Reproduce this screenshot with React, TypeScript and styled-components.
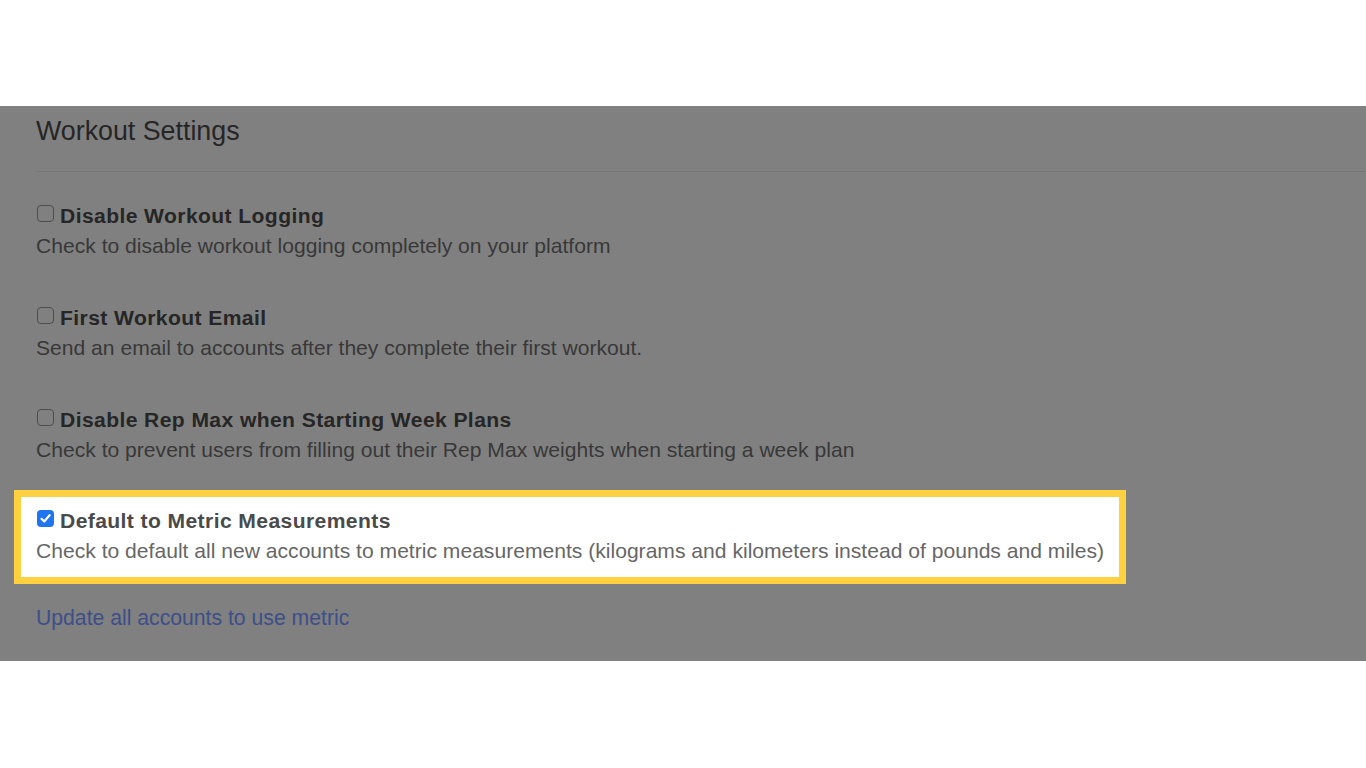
import React from "react";
import styled, { createGlobalStyle } from "styled-components";

const GlobalStyle = createGlobalStyle`
	html, body {
		margin: 0;
		padding: 0;
		background-color: #ffffff;
		font-family: "Liberation Sans", Arial, sans-serif;
	}
`;

const StyledPage = styled.div`
	width: 1366px;
	height: 768px;
	padding-top: 106px;
	box-sizing: border-box;
	overflow: hidden;
`;

const StyledPanel = styled.section`
	background-color: #808080;
	height: 555px;
	box-sizing: border-box;
	padding: 10px 0 0 36px;
	display: flex;
	flex-direction: column;
	align-items: flex-start;
`;

const StyledHeading = styled.h2`
	margin: 0;
	font-size: 26.8px;
	line-height: 30px;
	font-weight: normal;
	color: #262626;
`;

const StyledDivider = styled.hr`
	align-self: stretch;
	border: none;
	height: 1px;
	margin: 25px 0 29px;
	background-color: #777777;
`;

const StyledSetting = styled.div<{ $highlighted?: boolean }>`
	display: flex;
	flex-direction: column;
	font-size: 21.1px;
	line-height: 30px;
	margin-bottom: 42px;

	${({ $highlighted }) =>
		$highlighted &&
		`
		background-color: #ffffff;
		border: 7px solid #ffd140;
		margin: -17px 0 19px -22px;
		padding: 9px 15px 11px;
	`}
`;

const StyledTitleRow = styled.label<{ $highlighted?: boolean }>`
	display: flex;
	align-items: center;
	gap: 6px;
	font-weight: bold;
	letter-spacing: 0.4px;
	color: ${({ $highlighted }) => ($highlighted ? "#4a4a4a" : "#262626")};
`;

const StyledBox = styled.span<{ $checked?: boolean }>`
	width: 17px;
	height: 17px;
	box-sizing: border-box;
	border-radius: 4px;
	margin: -5px 0 0 1px;
	display: inline-flex;
	align-items: center;
	justify-content: center;
	border: ${({ $checked }) => ($checked ? "none" : "1px solid #4d4d4d")};
	background-color: ${({ $checked }) => ($checked ? "#1f74f0" : "transparent")};
`;

const StyledDescription = styled.span<{ $highlighted?: boolean }>`
	color: ${({ $highlighted }) => ($highlighted ? "#666666" : "#383838")};
`;

const StyledLink = styled.a`
	font-size: 21.2px;
	line-height: 30px;
	color: #3d4f88;
	text-decoration: none;
	cursor: pointer;
`;

const settings = [
	{
		title: "Disable Workout Logging",
		description: "Check to disable workout logging completely on your platform",
		checked: false,
	},
	{
		title: "First Workout Email",
		description: "Send an email to accounts after they complete their first workout.",
		checked: false,
	},
	{
		title: "Disable Rep Max when Starting Week Plans",
		description:
			"Check to prevent users from filling out their Rep Max weights when starting a week plan",
		checked: false,
	},
	{
		title: "Default to Metric Measurements",
		description:
			"Check to default all new accounts to metric measurements (kilograms and kilometers instead of pounds and miles)",
		checked: true,
	},
];

const Checkbox: React.FC<{ checked: boolean }> = ({ checked }) => {
	return (
		<StyledBox $checked={checked}>
			{checked && (
				<svg width="13" height="13" viewBox="0 0 13 13">
					<path
						d="M2.5 6.8 L5.2 9.5 L10.6 3.2"
						fill="none"
						stroke="#ffffff"
						strokeWidth="2.2"
						strokeLinecap="round"
						strokeLinejoin="round"
					/>
				</svg>
			)}
		</StyledBox>
	);
};

const App: React.FC = () => {
	return (
		<StyledPage>
			<GlobalStyle />
			<StyledPanel>
				<StyledHeading>Workout Settings</StyledHeading>
				<StyledDivider />
				{settings.map((setting) => {
					return (
						<StyledSetting key={setting.title} $highlighted={setting.checked}>
							<StyledTitleRow $highlighted={setting.checked}>
								<Checkbox checked={setting.checked} />
								{setting.title}
							</StyledTitleRow>
							<StyledDescription $highlighted={setting.checked}>
								{setting.description}
							</StyledDescription>
						</StyledSetting>
					);
				})}
				<StyledLink>Update all accounts to use metric</StyledLink>
			</StyledPanel>
		</StyledPage>
	);
};

export default App;
